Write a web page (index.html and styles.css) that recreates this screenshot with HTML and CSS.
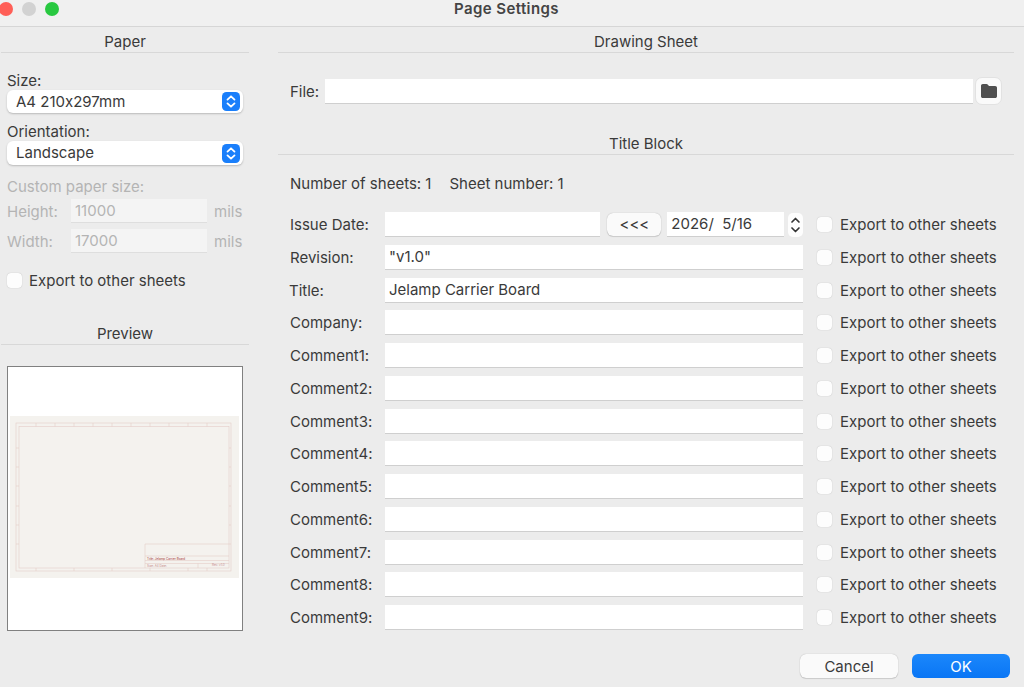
FILE: index.html
```html
<!DOCTYPE html>
<html lang="en">
<head>
  <meta charset="UTF-8">
  <title>Page Settings</title>
  <link rel="stylesheet" href="styles.css">
</head>
<body>
  <header class="titlebar">
    <div class="lights">
      <span class="light red"></span>
      <span class="light gray"></span>
      <span class="light green"></span>
    </div>
    <h1>Page Settings</h1>
  </header>

  <main class="dialog">
    <section class="left">
      <h2 class="head">Paper</h2>

      <label class="lbl size-lbl">Size:</label>
      <div class="select">
        <span>A4 210x297mm</span>
        <svg class="updown" viewBox="0 0 18 19"><rect width="18" height="19" rx="4.5" fill="#1a7ffb"/><path d="M5.5 7.6 9 4.3l3.5 3.3M5.5 11.4 9 14.7l3.5-3.3" fill="none" stroke="#fff" stroke-width="1.8" stroke-linecap="round" stroke-linejoin="round"/></svg>
      </div>

      <label class="lbl orient-lbl">Orientation:</label>
      <div class="select tall">
        <span>Landscape</span>
        <svg class="updown" viewBox="0 0 18 19"><rect width="18" height="19" rx="4.5" fill="#1a7ffb"/><path d="M5.5 7.6 9 4.3l3.5 3.3M5.5 11.4 9 14.7l3.5-3.3" fill="none" stroke="#fff" stroke-width="1.8" stroke-linecap="round" stroke-linejoin="round"/></svg>
      </div>

      <label class="lbl custom-lbl off">Custom paper size:</label>
      <div class="dim">
        <span class="off dim-name">Height:</span>
        <div class="field disabled">11000</div>
        <span class="off">mils</span>
      </div>
      <div class="dim">
        <span class="off dim-name">Width:</span>
        <div class="field disabled">17000</div>
        <span class="off">mils</span>
      </div>

      <div class="check left-check">
        <span class="box"></span>
        <span>Export to other sheets</span>
      </div>

      <h2 class="head preview-head">Preview</h2>
      <div class="preview">
        <svg class="sheet" viewBox="0 0 229 162">
          <rect width="229" height="162" fill="#f4f2ee"/>
          <g fill="none" stroke="#e4ccc8" stroke-width=".6">
            <rect x="6" y="7" width="215" height="148"/>
            <rect x="9" y="10.5" width="210" height="141.500"/>
            <path d="M26 7v3.500M45 7v3.500M64 7v3.500M83 7v3.500M102 7v3.500M121 7v3.500M140 7v3.500M159 7v3.500M178 7v3.500M197 7v3.500"/>
            <path d="M26 152v3M64 152v3M102 152v3M140 152v3M178 152v3M197 152v3"/>
            <path d="M6 32h3M6 51h3M6 70h3M6 90h3M6 109h3M6 128h3M219 32h2M219 51h2M219 70h2M219 90h2M219 109h2M219 128h2"/>
            <path d="M135 152v-24h84M135 140h84M135 144.500h84M135 147.500h84M188 147.500v4.500"/>
          </g>
          <text class="sheet-text" x="137" y="144">Title: Jelamp Carrier Board</text>
          <text class="sheet-text faint" x="137" y="151">Size: A4 Date:</text>
          <text class="sheet-text faint" x="202" y="150">Rev: v1.0</text>
        </svg>
      </div>
    </section>

    <section class="right">
      <h2 class="head">Drawing Sheet</h2>

      <div class="file-row">
        <span class="file-lbl">File:</span>
        <div class="field file-field"></div>
        <button class="folder-btn">
          <svg viewBox="0 0 16 14" width="16" height="14"><path d="M1.800 0h3.700c.6 0 1 .2 1.400.7L8 2h6.200c1 0 1.800.8 1.800 1.800v8.400c0 1-.8 1.800-1.800 1.800H1.800C.8 14 0 13.200 0 12.200V1.800C0 .8.800 0 1.800 0z" fill="#4f4f4f"/></svg>
        </button>
      </div>

      <h2 class="head block-head">Title Block</h2>

      <div class="counts">
        <span>Number of sheets: 1</span>
        <span>Sheet number: 1</span>
      </div>

      <div class="rows">
        <span>Issue Date:</span>
        <div class="date-cell">
          <div class="field date-text"></div>
          <button class="btn arrows">&lt;&lt;&lt;</button>
          <div class="field date-val">2026/&nbsp;&nbsp;5/16</div>
          <svg class="stepper" viewBox="0 0 15 24"><rect width="15" height="24" rx="5" fill="#fdfdfd"/><path d="M4 9l3.500-3.500L11 9M4 15l3.500 3.500L11 15" fill="none" stroke="#333" stroke-width="1.700" stroke-linecap="round" stroke-linejoin="round"/></svg>
        </div>
        <div class="check"><span class="box"></span><span>Export to other sheets</span></div>

        <span>Revision:</span>
        <div class="field">"v1.0"</div>
        <div class="check"><span class="box"></span><span>Export to other sheets</span></div>

        <span class="title-lbl">Title:</span>
        <div class="field">Jelamp Carrier Board</div>
        <div class="check"><span class="box"></span><span>Export to other sheets</span></div>

        <span>Company:</span>
        <div class="field"></div>
        <div class="check"><span class="box"></span><span>Export to other sheets</span></div>

        <span>Comment1:</span>
        <div class="field"></div>
        <div class="check"><span class="box"></span><span>Export to other sheets</span></div>

        <span>Comment2:</span>
        <div class="field"></div>
        <div class="check"><span class="box"></span><span>Export to other sheets</span></div>

        <span>Comment3:</span>
        <div class="field"></div>
        <div class="check"><span class="box"></span><span>Export to other sheets</span></div>

        <span>Comment4:</span>
        <div class="field"></div>
        <div class="check"><span class="box"></span><span>Export to other sheets</span></div>

        <span>Comment5:</span>
        <div class="field"></div>
        <div class="check"><span class="box"></span><span>Export to other sheets</span></div>

        <span>Comment6:</span>
        <div class="field"></div>
        <div class="check"><span class="box"></span><span>Export to other sheets</span></div>

        <span>Comment7:</span>
        <div class="field"></div>
        <div class="check"><span class="box"></span><span>Export to other sheets</span></div>

        <span>Comment8:</span>
        <div class="field"></div>
        <div class="check"><span class="box"></span><span>Export to other sheets</span></div>

        <span>Comment9:</span>
        <div class="field"></div>
        <div class="check"><span class="box"></span><span>Export to other sheets</span></div>
      </div>

      <div class="actions">
        <button class="btn action">Cancel</button>
        <button class="btn action primary">OK</button>
      </div>
    </section>
  </main>
</body>
</html>
```

FILE: styles.css
```css
html, body {
  margin: 0;
  height: 100%;
  overflow: hidden;
}
body {
  background: #ececec;
  color: #3a3a3a;
  font-family: Inter, "Liberation Sans", sans-serif;
  font-size: 15px;
  font-feature-settings: "calt" 0;
}

.titlebar {
  height: 26px;
  background: #f0f0f0;
  border-bottom: 1px solid #d6d6d6;
  display: flex;
  align-items: center;
  justify-content: center;
  position: relative;
}
.titlebar h1 {
  margin: 0 11px 10px 0;
  font-size: 15px;
  font-weight: 600;
  letter-spacing: .4px;
  line-height: 17px;
  color: #444;
}
.lights {
  position: absolute;
  left: -1px;
  top: 2px;
  display: flex;
  gap: 9px;
}
.light {
  width: 14px;
  height: 14px;
  border-radius: 50%;
}
.red { background: #ff5f57; }
.gray { background: #d2d2d2; }
.green { background: #28c840; }

.dialog {
  display: flex;
}
.left {
  width: 248px;
  margin-left: 1px;
  flex: none;
}
.right {
  width: 736px;
  margin-left: 29px;
  flex: none;
}

.head {
  box-sizing: border-box;
  height: 26px;
  margin: 0;
  padding-top: 6px;
  font-size: 15px;
  font-weight: 400;
  line-height: 18px;
  text-align: center;
  border-bottom: 1px solid #d8d8d8;
}

.lbl {
  display: block;
  margin-left: 6px;
  line-height: 19px;
}
.size-lbl { margin-top: 18px; }
.orient-lbl { margin-top: 9px; }
.custom-lbl { margin-top: 12px; margin-bottom: 3px; }
.off { color: #b4b4b4; }

.select {
  box-sizing: border-box;
  width: 236px;
  height: 23px;
  margin-left: 6px;
  padding: 0 3px 0 9px;
  display: flex;
  align-items: center;
  justify-content: space-between;
  background: #fff;
  border-radius: 6px;
  box-shadow: 0 1px 2px rgba(0, 0, 0, .22);
}
.select span { margin-bottom: 1px; }
.select.tall { height: 24px; }
.select.tall span { margin-bottom: 2px; }
.updown {
  width: 18px;
  height: 19px;
}

.field {
  box-sizing: border-box;
  height: 25px;
  padding-left: 4px;
  line-height: 24px;
  background: #fff;
  border-bottom: 1px solid #cfcfcf;
  white-space: nowrap;
}
.field.disabled {
  width: 136px;
  height: 24px;
  background: #f4f4f4;
  color: #b4b4b4;
  border-bottom-color: #dedede;
}

.dim {
  display: flex;
  align-items: center;
  gap: 7px;
  margin: 0 0 6px 6px;
}
.dim-name { width: 57px; }

.check {
  display: flex;
  align-items: center;
  gap: 8px;
}
.box {
  box-sizing: border-box;
  width: 15px;
  height: 15px;
  background: #fdfdfd;
  border-radius: 4px;
  box-shadow: 0 0 1px rgba(0, 0, 0, .28);
}
.left-check {
  margin: 20px 0 0 6px;
  height: 15px;
  gap: 7px;
}

.preview-head { margin-top: 31px; }
.preview {
  box-sizing: border-box;
  width: 236px;
  height: 265px;
  margin: 21px 0 0 6px;
  display: flex;
  align-items: center;
  justify-content: center;
  background: #fff;
  border: 1px solid #808080;
}
.sheet {
  display: block;
  width: 229px;
  height: 162px;
  margin: 0 2px 3px 0;
}
.sheet-text {
  font-size: 3px;
  fill: #a83a3a;
}
.sheet-text.faint {
  fill: #c48c8c;
}

.file-row {
  height: 28px;
  margin: 24px 0 0 11px;
  display: flex;
  align-items: center;
}
.file-lbl { width: 36px; padding-left: 1px; box-sizing: border-box; }
.file-field { width: 648px; }
.folder-btn {
  box-sizing: border-box;
  width: 27px;
  height: 28px;
  margin-left: 2px;
  padding: 0;
  display: flex;
  align-items: center;
  justify-content: center;
  background: #fafafa;
  border: 1px solid #e2e2e2;
  border-radius: 7px;
}

.block-head { margin-top: 24px; }

.counts {
  display: flex;
  gap: 18px;
  margin: 20px 0 0 12px;
  line-height: 18px;
}

.rows {
  margin: 19px 0 0 12px;
  display: grid;
  grid-template-columns: 95px 418px auto;
  grid-auto-rows: 25px;
  row-gap: 7.75px;
  align-items: center;
}
.rows .check { margin-left: 14px; }
.title-lbl { margin-left: -1px; }

.date-cell {
  display: flex;
  align-items: center;
}
.date-text { width: 216px; }
.date-val { width: 117px; margin-left: 6px; }
.arrows {
  width: 54px;
  height: 24px;
  margin-left: 7px;
}
.stepper {
  width: 15px;
  height: 24px;
  margin-left: 4px;
}

.btn {
  height: 23px;
  padding: 0;
  font: inherit;
  color: #3a3a3a;
  background: #fafafa;
  border: none;
  border-radius: 6px;
  box-shadow: 0 0 1px rgba(0, 0, 0, .3), 0 1px 1px rgba(0, 0, 0, .12);
}
.actions {
  display: flex;
  justify-content: flex-end;
  gap: 14px;
  margin: 24px 4px 0 0;
}
.action {
  width: 98px;
  height: 24px;
}
.primary {
  color: #fff;
  background: linear-gradient(#1b87fb, #0a76f5);
  box-shadow: none;
}
```
